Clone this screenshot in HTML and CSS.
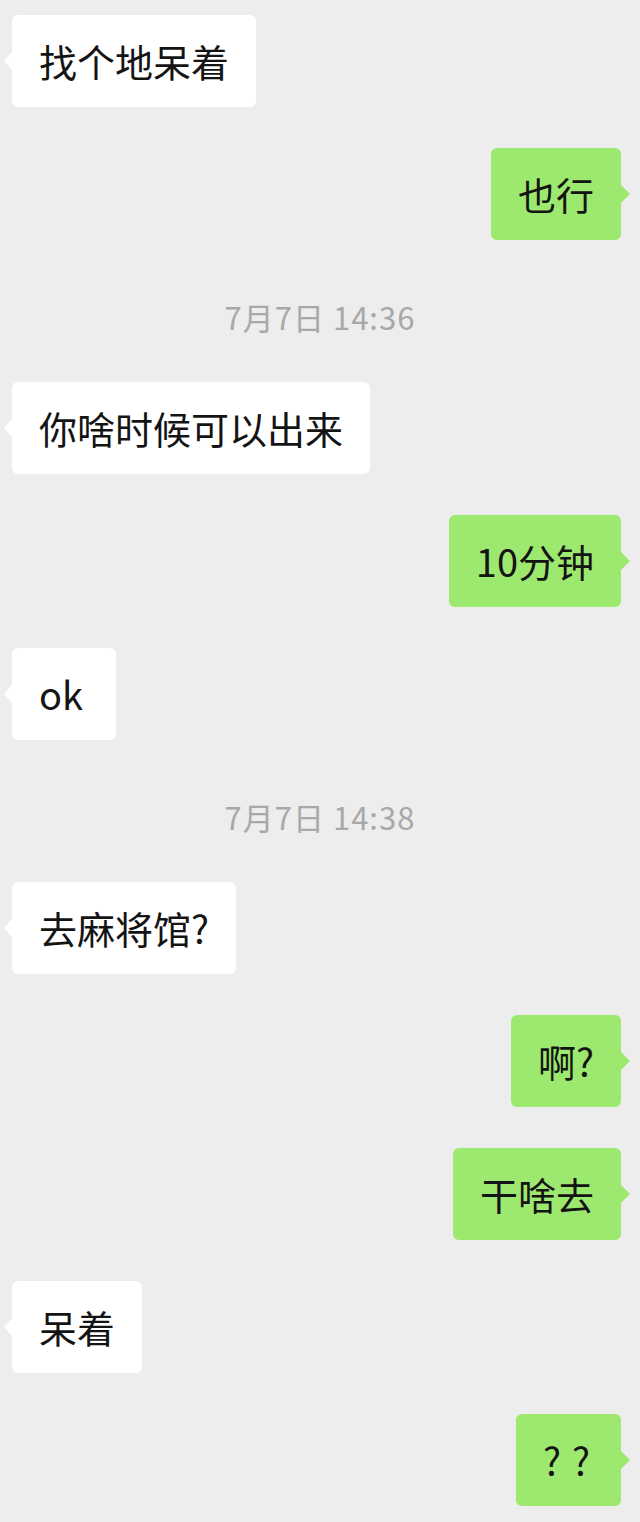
FILE: index.html
```html
<!DOCTYPE html>
<html lang="zh-CN">
<head>
<meta charset="utf-8">
<title>聊天</title>
<link rel="stylesheet" href="styles.css">
</head>
<body>
<div class="chat">
  <div class="row left"><div class="bubble">找个地呆着</div></div>
  <div class="row right"><div class="bubble">也行</div></div>
  <div class="time">7月7日 14:36</div>
  <div class="row left"><div class="bubble">你啥时候可以出来</div></div>
  <div class="row right"><div class="bubble">10分钟</div></div>
  <div class="row left"><div class="bubble latin">ok</div></div>
  <div class="time">7月7日 14:38</div>
  <div class="row left"><div class="bubble">去麻将馆?</div></div>
  <div class="row right"><div class="bubble">啊?</div></div>
  <div class="row right"><div class="bubble">干啥去</div></div>
  <div class="row left"><div class="bubble">呆着</div></div>
  <div class="row right"><div class="bubble qq">??</div></div>
</div>
</body>
</html>
```
FILE: styles.css
```css
html, body {
  margin: 0;
  padding: 0;
  background: #ededed;
}
body {
  font-family: "Noto Sans CJK SC", "Noto Sans", sans-serif;
  color: #141414;
}
.chat {
  display: flex;
  flex-direction: column;
  gap: 41px;
  padding-top: 15px;
  padding-bottom: 20px;
}
.row {
  display: flex;
}
.row.left {
  justify-content: flex-start;
  padding-left: 12px;
}
.row.right {
  justify-content: flex-end;
  padding-right: 19px;
}
.bubble {
  position: relative;
  font-size: 38px;
  line-height: 52px;
  padding: 20px 27px;
  border-radius: 6px;
  background: #ffffff;
  white-space: nowrap;
}
.right .bubble {
  background: #9de96f;
}
.left .bubble::before {
  content: "";
  position: absolute;
  left: -8px;
  top: 37px;
  border-top: 9px solid transparent;
  border-bottom: 9px solid transparent;
  border-right: 8px solid #ffffff;
}
.right .bubble::after {
  content: "";
  position: absolute;
  right: -9px;
  top: 37px;
  border-top: 9px solid transparent;
  border-bottom: 9px solid transparent;
  border-left: 9px solid #9de96f;
}
.bubble.latin {
  padding-right: 33px;
}
.bubble.qq {
  letter-spacing: 11px;
  padding-right: 20px;
}
.time {
  text-align: center;
  font-size: 31px;
  letter-spacing: 1px;
  line-height: 30px;
  color: #a8a8a8;
  margin-top: 21px;
  margin-bottom: 9px;
}
```
